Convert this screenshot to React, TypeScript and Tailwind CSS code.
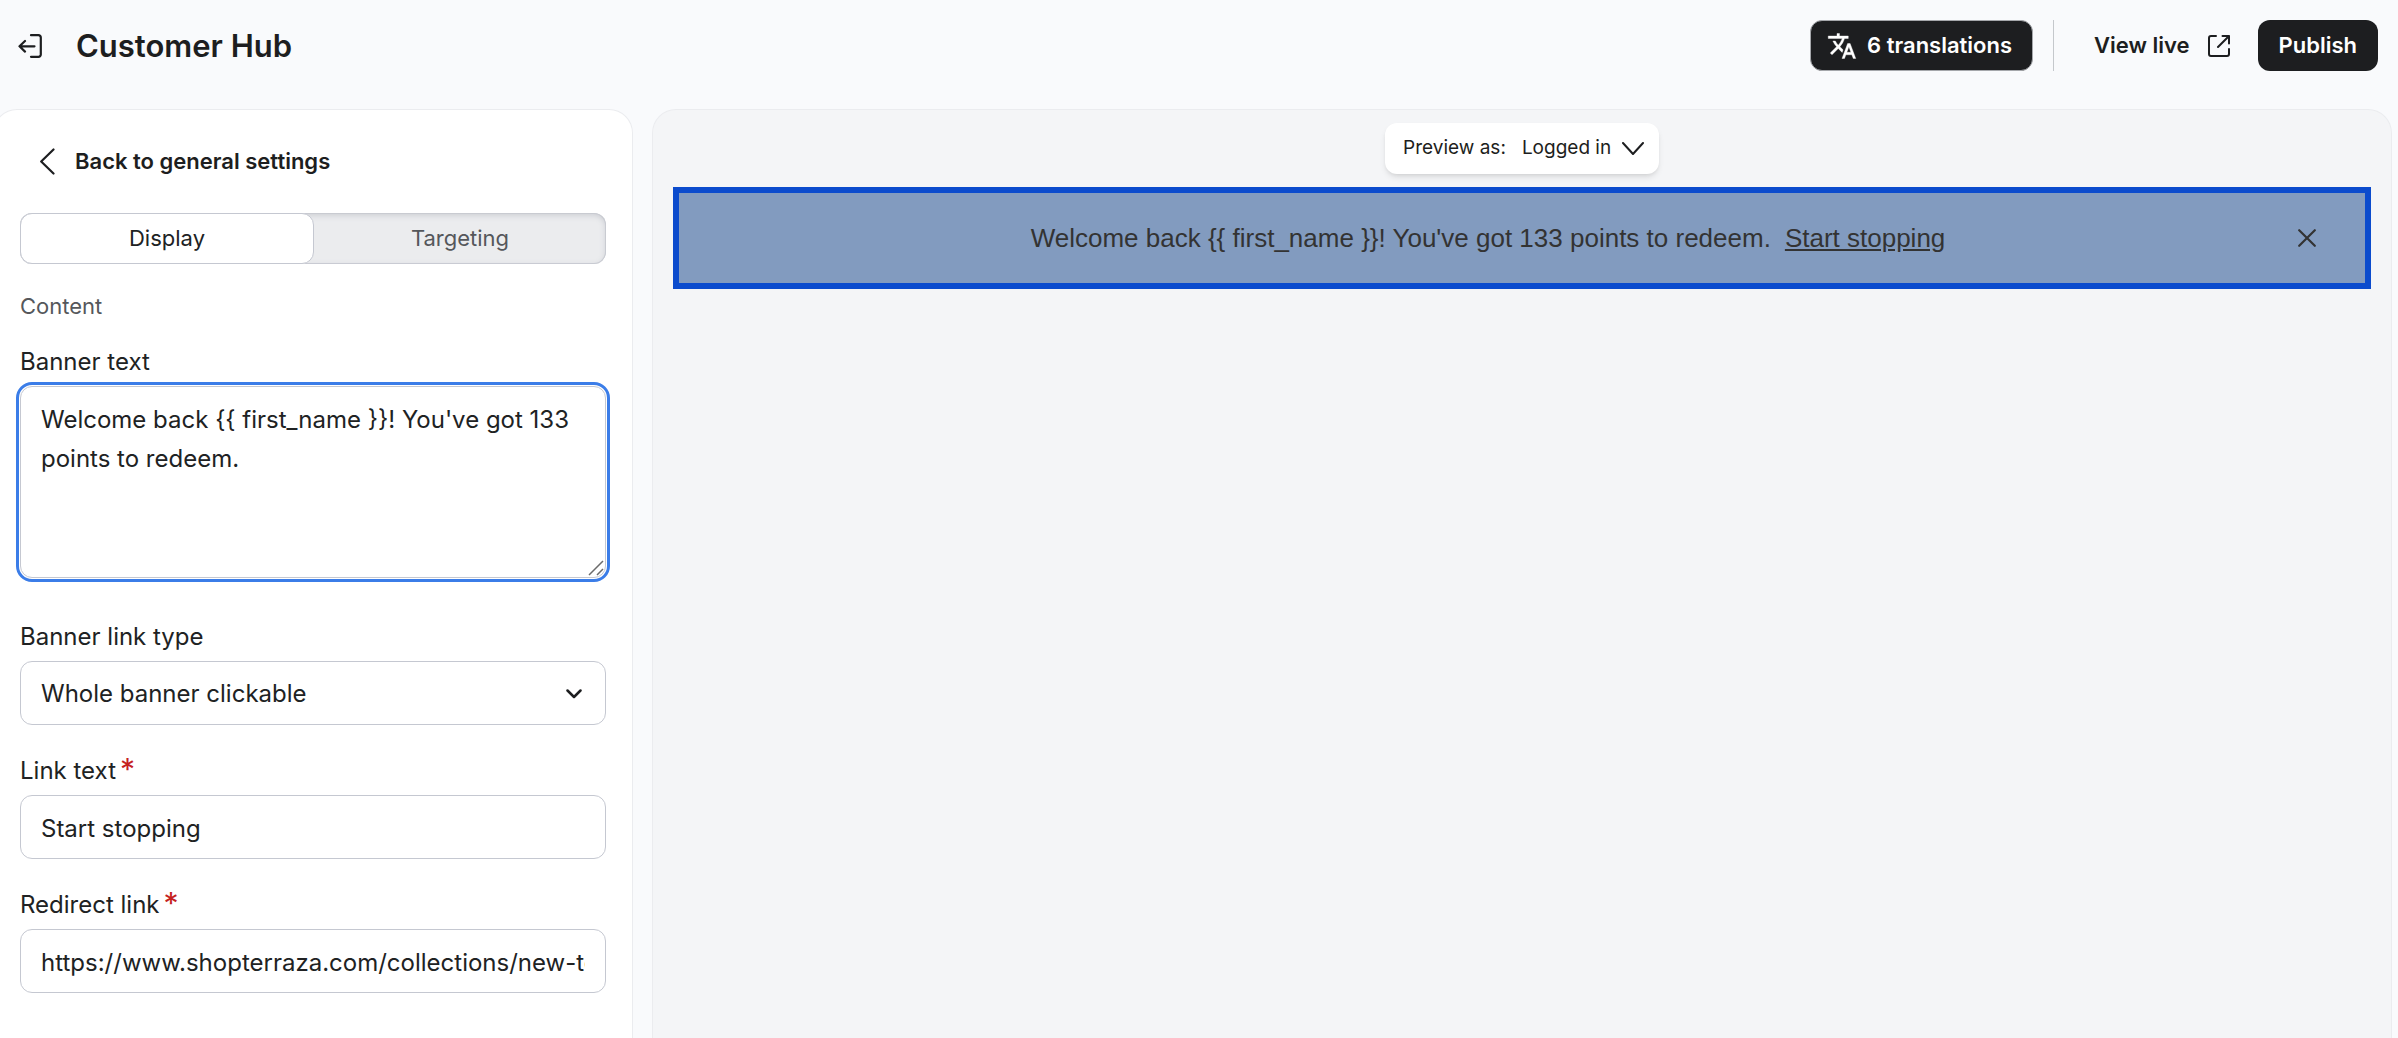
import { useState } from 'react'
import type { ReactNode } from 'react'

const inputClass = 'block h-16 w-full rounded-xl border border-[#c5c8d1] bg-white px-5 pt-0.5 text-2xl text-[#202223] outline-none'

const ExitIcon = () => (
    <svg viewBox="0 0 24 24" className="w-6" fill="none" stroke="currentColor" strokeWidth="2.200" strokeLinecap="round" strokeLinejoin="round" aria-hidden="true">
        <path d="M13 1.200h7.500a2.300 2.300 0 0 1 2.300 2.300v17a2.300 2.300 0 0 1-2.300 2.300H13" />
        <path d="M16.500 12.300H1.500M7 7l-5.500 5.300L7 17.600" />
    </svg>
)

const TranslateIcon = () => (
    <svg viewBox="0 0 24 24" className="w-[30px]" fill="currentColor" stroke="currentColor" strokeWidth="0.300" aria-hidden="true">
        <path d="M12.870 15.070l-2.540-2.510.03-.03A17.520 17.520 0 0 0 14.070 6H17V4h-7V2H8v2H1v2h11.170C11.500 7.920 10.440 9.750 9 11.350 8.070 10.320 7.300 9.190 6.690 8h-2c.73 1.630 1.730 3.170 2.980 4.560l-5.090 5.020L4 19l5-5 3.110 3.110.76-2.040zM18.500 10h-2L12 22h2l1.120-3h4.750L21 22h2l-4.500-12zm-2.620 7l1.620-4.330L19.120 17h-3.240z" />
    </svg>
)

const ExternalIcon = () => (
    <svg viewBox="0 0 22 22" className="w-[22px]" fill="none" stroke="currentColor" strokeWidth="2" strokeLinecap="round" strokeLinejoin="round" aria-hidden="true">
        <path d="M8 1H3a2 2 0 0 0-2 2v16a2 2 0 0 0 2 2h16a2 2 0 0 0 2-2v-5" />
        <path d="M10 12L21 1M14.500 1H21v7.500" />
    </svg>
)

const ChevronLeft = () => (
    <svg viewBox="0 0 15 27" className="w-[15px]" fill="none" stroke="currentColor" strokeWidth="2.200" strokeLinecap="round" strokeLinejoin="round" aria-hidden="true">
        <path d="M13.500 1.500L1.200 13.500l12.300 12" />
    </svg>
)

const Field = ({ id, label, required, children }: { id: string, label: string, required?: boolean, children: ReactNode }) => (
    <div>
        <label htmlFor={id} className="mb-2 flex gap-1 text-2xl leading-8 text-[#202223]">
            {label}
            {required && <span className="text-[30px] leading-7 text-[#c5221f]">*</span>}
        </label>
        {children}
    </div>
)

const Header = () => (
    <header className="flex items-center justify-between pt-5 pr-5 pb-[38px] pl-[18px]">
        <div className="flex items-center gap-[34px]">
            <button type="button" aria-label="Exit"><ExitIcon /></button>
            <h1 className="text-[31px] leading-10 font-semibold">Customer Hub</h1>
        </div>
        <div className="flex items-center text-[22px] font-semibold">
            <button type="button" className="flex h-[51px] items-center gap-2.5 rounded-xl border border-[#a5a7ab] bg-[#1d1e20] pr-5 pl-4 text-white">
                <TranslateIcon />6 translations
            </button>
            <div className="ml-5 h-[51px] border-l border-[#c5c8cc]" />
            <a href="#live" className="ml-10 flex items-center gap-[18px]">View live<ExternalIcon /></a>
            <button type="button" className="ml-7 h-[51px] rounded-xl bg-[#1d1e20] px-[21px] text-white">Publish</button>
        </div>
    </header>
)

const App = () => {
    const [text, setText] = useState("Welcome back {{ first_name }}! You've got 133 points to redeem.")
    const [linkText, setLinkText] = useState('Start stopping')
    const [link, setLink] = useState('https://www.shopterraza.com/collections/new-tops')
    const [tab, setTab] = useState('Display')

    return (
        <div className="flex min-h-screen flex-col overflow-hidden bg-[#f9fafc] font-[Inter,sans-serif] text-[#1d1e20]">
            <Header />
            <div className="flex grow gap-[19px] pr-1.5">
                <aside className="-ml-[7px] w-[640px] shrink-0 rounded-t-3xl border border-b-0 border-[#ebecef] bg-white px-[26px] pt-[31px]">
                    <button type="button" className="ml-5 flex h-10 items-center gap-5 text-[22px] font-semibold">
                        <ChevronLeft />Back to general settings
                    </button>
                    <div role="tablist" className="mt-8 flex h-[51px] rounded-xl bg-[#ebecee] text-[22px] inset-shadow-[0_2px_6px_#c8cad0] ring-1 ring-[#c9ccd3] ring-inset">
                        {['Display', 'Targeting'].map(name => (
                            <button key={name} type="button" role="tab" aria-selected={tab === name} onClick={() => setTab(name)}
                                className={tab === name ? 'flex-1 rounded-xl border border-[#c5c8d1] bg-white text-[#202223]' : 'flex-1 text-[#55575b]'}>
                                {name}
                            </button>
                        ))}
                    </div>
                    <h2 className="mt-[26px] text-[22px] leading-8 text-[#55575b]">Content</h2>
                    <form className="mt-6 flex flex-col gap-[30px]">
                        <Field id="banner-text" label="Banner text">
                            <div className="relative mb-[13px]">
                                <textarea id="banner-text" value={text} onChange={e => setText(e.target.value)}
                                    className="block h-48 w-full resize-none rounded-xl border border-[#c5c8d1] px-5 py-[13px] text-2xl leading-[39px] text-[#202223] outline-3 outline-offset-1 outline-[#3b7de8]" />
                                <svg viewBox="0 0 16 16" className="absolute right-0.5 bottom-0.5 w-4" stroke="#6b6b6b" strokeWidth="1.500" aria-hidden="true">
                                    <path d="M1 15L15 1M9 15l6-6" />
                                </svg>
                            </div>
                        </Field>
                        <Field id="link-type" label="Banner link type">
                            <div className="relative">
                                <select id="link-type" className={`${inputClass} appearance-none`}>
                                    <option>Whole banner clickable</option>
                                </select>
                                <svg viewBox="0 0 16 10" className="pointer-events-none absolute top-7 right-6 w-4" fill="none" stroke="currentColor" strokeWidth="2.500" strokeLinecap="round" strokeLinejoin="round" aria-hidden="true">
                                    <path d="M1.500 1.500L8 8l6.500-6.500" />
                                </svg>
                            </div>
                        </Field>
                        <Field id="link-text" label="Link text" required>
                            <input id="link-text" type="text" value={linkText} onChange={e => setLinkText(e.target.value)} className={inputClass} />
                        </Field>
                        <Field id="redirect" label="Redirect link" required>
                            <input id="redirect" type="text" value={link} onChange={e => setLink(e.target.value)} className={inputClass} />
                        </Field>
                    </form>
                </aside>
                <main className="flex grow flex-col items-center rounded-t-3xl border border-b-0 border-[#ebecef] bg-[#f4f5f7] px-5 pt-[13px]">
                    <div className="flex h-[51px] items-center rounded-xl bg-white pr-[15px] pl-[18px] text-[19px] shadow-md">
                        <label htmlFor="preview-as">Preview as:</label>
                        <div className="relative ml-4">
                            <select id="preview-as" className="block appearance-none pr-8 outline-none">
                                <option>Logged in</option>
                            </select>
                            <svg viewBox="0 0 22 13" className="pointer-events-none absolute top-2 right-0 w-[22px]" fill="none" stroke="currentColor" strokeWidth="2" strokeLinecap="round" strokeLinejoin="round" aria-hidden="true">
                                <path d="M1 1l10 11L21 1" />
                            </svg>
                        </div>
                    </div>
                    <section className="mt-[13px] flex h-[102px] w-full items-center border-6 border-[#0b4bcd] bg-[#829bbf] px-6 text-[#333] font-['Liberation_Sans',sans-serif] text-[26px]">
                        <p className="grow text-center">{text}<a href="#redirect" className="ml-3.5 underline">{linkText}</a></p>
                        <button type="button" aria-label="Close banner" className="flex h-16 w-[68px] items-center justify-center">
                            <svg viewBox="0 0 18 18" className="w-[18px]" stroke="currentColor" strokeWidth="2.200" strokeLinecap="round" aria-hidden="true">
                                <path d="M1.200 1.200l15.600 15.600M16.800 1.200L1.200 16.800" />
                            </svg>
                        </button>
                    </section>
                </main>
            </div>
        </div>
    )
}

export default App
